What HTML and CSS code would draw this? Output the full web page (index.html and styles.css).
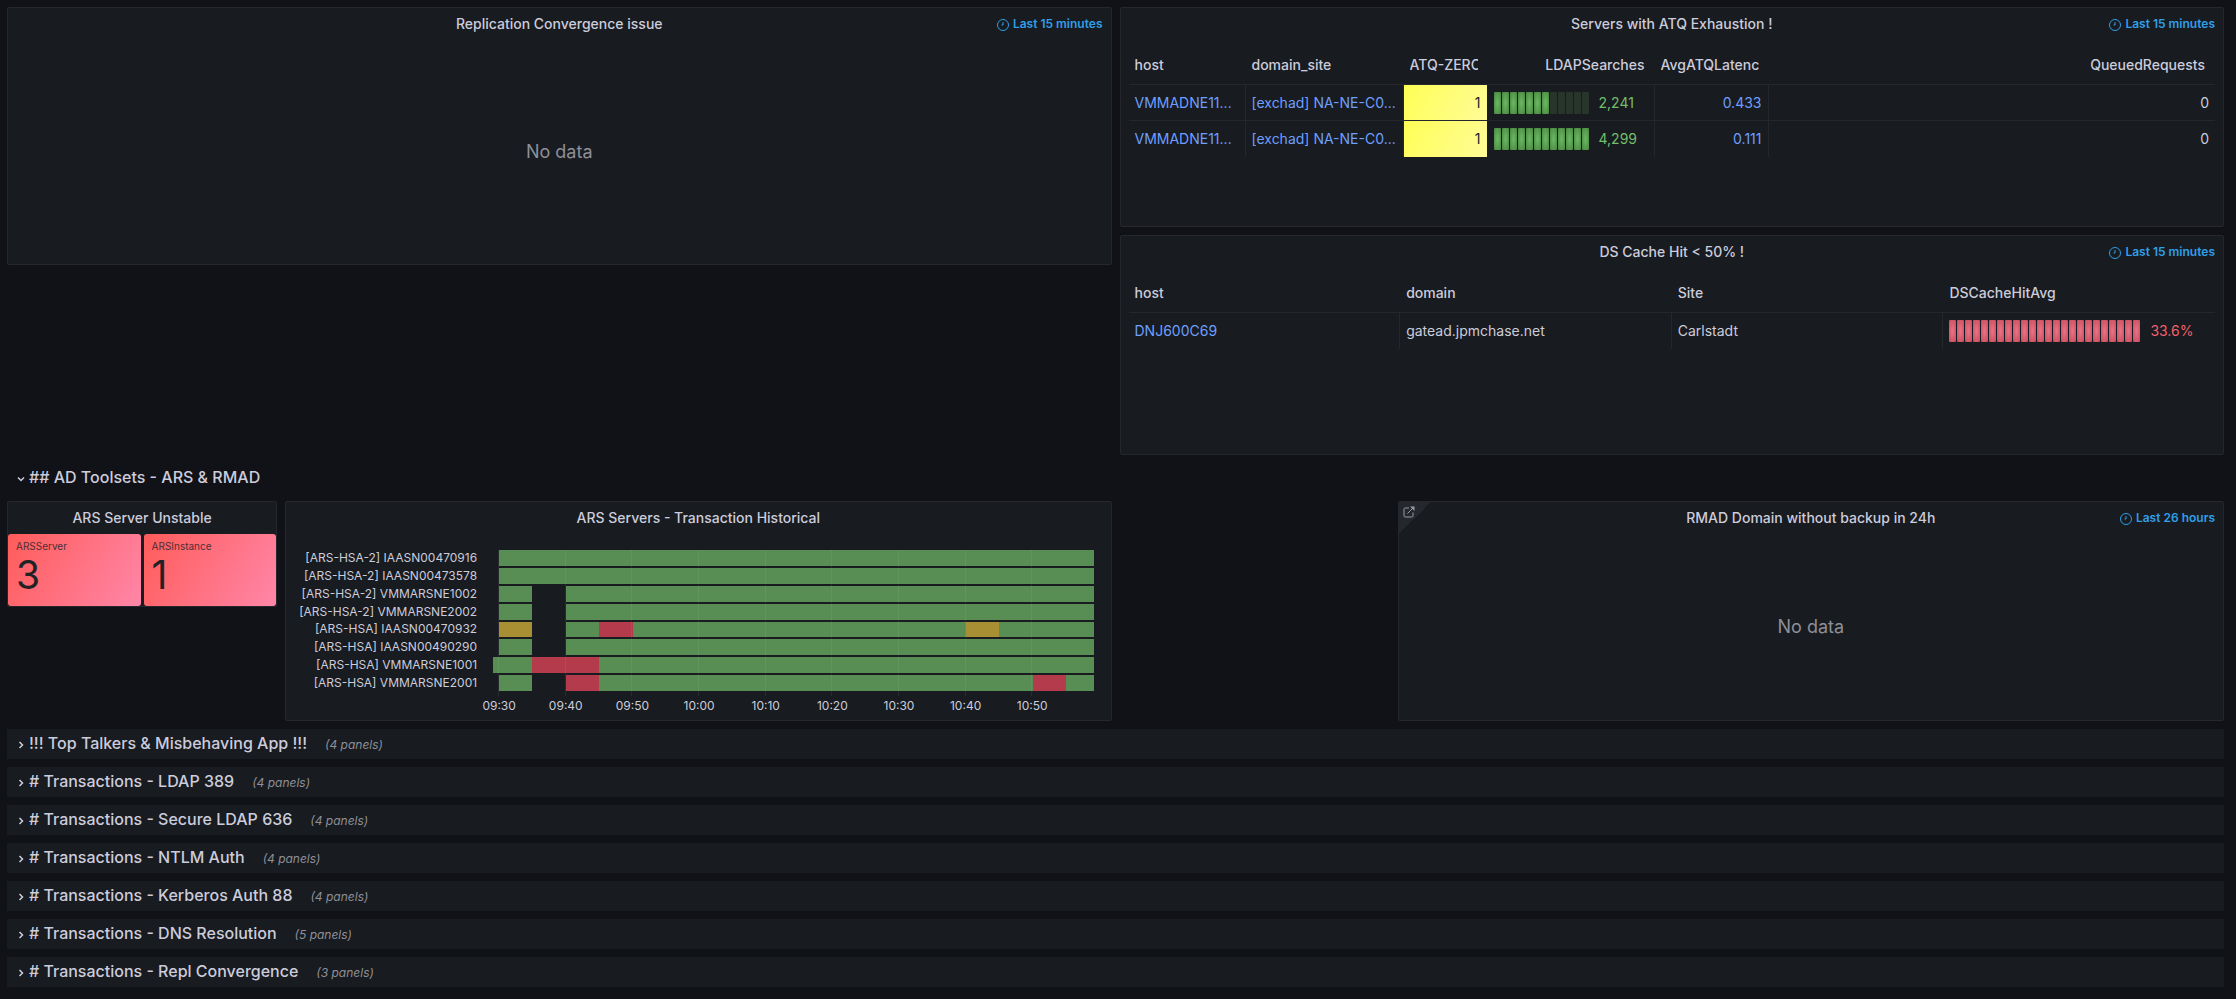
FILE: index.html
```html
<!DOCTYPE html>
<html lang="en">
<head>
<meta charset="utf-8">
<title>AD Dashboard</title>
<link rel="stylesheet" href="styles.css">
</head>
<body>
<svg class="sprite" aria-hidden="true">
  <symbol id="clock" viewBox="0 0 24 24"><circle cx="12" cy="12" r="11"/><path d="M12 6v6H9"/></symbol>
  <symbol id="right" viewBox="0 0 12 12"><path d="M4.500 3 7.500 6 4.500 9"/></symbol>
  <symbol id="down" viewBox="0 0 12 12"><path d="M3 4.500 6 7.500 9 4.500"/></symbol>
  <symbol id="external" viewBox="0 0 24 24"><path d="M12 4H4.500A2.500 2.500 0 0 0 2 6.500v13A2.500 2.500 0 0 0 4.500 22h13a2.500 2.500 0 0 0 2.500-2.500V13M9 15 20 4"/><path class="tip" d="M14 1h9v9z"/></symbol>
</svg>
<main class="dashboard">
  <section class="panel replication">
    <header class="panel-header"><h2>Replication Convergence issue</h2><span class="time"><svg><use href="#clock"/></svg>Last 15 minutes</span></header>
    <p class="no-data">No data</p>
  </section>

  <section class="panel atq">
    <header class="panel-header"><h2>Servers with ATQ Exhaustion !</h2><span class="time"><svg><use href="#clock"/></svg>Last 15 minutes</span></header>
    <div class="table-wrap">
      <table class="table">
        <colgroup><col class="c-host"><col class="c-site"><col class="c-zero"><col class="c-ldap"><col class="c-lat"><col></colgroup>
        <thead><tr><th>host</th><th>domain_site</th><th class="num clip"><span>ATQ-ZERO</span></th><th class="num">LDAPSearches</th><th class="num clip"><span>AvgATQLatency</span></th><th class="num">QueuedRequests</th></tr></thead>
        <tbody>
          <tr>
            <td><a href="#">VMMADNE11...</a></td><td><a href="#">[exchad] NA-NE-C0...</a></td><td class="num warn">1</td>
            <td><div class="gauge good"><i></i><i></i><i></i><i></i><i></i><i></i><i></i><i class="off"></i><i class="off"></i><i class="off"></i><i class="off"></i><i class="off"></i><span>2,241</span></div></td>
            <td class="num"><a href="#">0.433</a></td><td class="num">0</td>
          </tr>
          <tr>
            <td><a href="#">VMMADNE11...</a></td><td><a href="#">[exchad] NA-NE-C0...</a></td><td class="num warn">1</td>
            <td><div class="gauge good"><i></i><i></i><i></i><i></i><i></i><i></i><i></i><i></i><i></i><i></i><i></i><i></i><span>4,299</span></div></td>
            <td class="num"><a href="#">0.111</a></td><td class="num">0</td>
          </tr>
        </tbody>
      </table>
    </div>
  </section>

  <section class="panel cache">
    <header class="panel-header"><h2>DS Cache Hit &lt; 50% !</h2><span class="time"><svg><use href="#clock"/></svg>Last 15 minutes</span></header>
    <div class="table-wrap">
      <table class="table">
        <thead><tr><th>host</th><th>domain</th><th>Site</th><th>DSCacheHitAvg</th></tr></thead>
        <tbody>
          <tr>
            <td><a href="#">DNJ600C69</a></td><td>gatead.jpmchase.net</td><td>Carlstadt</td>
            <td><div class="gauge bad"><i></i><i></i><i></i><i></i><i></i><i></i><i></i><i></i><i></i><i></i><i></i><i></i><i></i><i></i><i></i><i></i><i></i><i></i><i></i><i></i><i></i><i></i><i></i><i></i><span>33.6%</span></div></td>
          </tr>
        </tbody>
      </table>
    </div>
  </section>

  <button class="row open" type="button" aria-expanded="true"><svg><use href="#down"/></svg><span>## AD Toolsets - ARS &amp; RMAD</span></button>

  <section class="panel unstable">
    <header class="panel-header"><h2>ARS Server Unstable</h2></header>
    <div class="stats">
      <div class="stat"><span>ARSServer</span><strong>3</strong></div>
      <div class="stat"><span>ARSInstance</span><strong>1</strong></div>
    </div>
  </section>

  <section class="panel history">
    <header class="panel-header"><h2>ARS Servers - Transaction Historical</h2></header>
    <div class="timeline">
      <ul class="names">
        <li>[ARS-HSA-2] IAASN00470916</li>
        <li>[ARS-HSA-2] IAASN00473578</li>
        <li>[ARS-HSA-2] VMMARSNE1002</li>
        <li>[ARS-HSA-2] VMMARSNE2002</li>
        <li>[ARS-HSA] IAASN00470932</li>
        <li>[ARS-HSA] IAASN00490290</li>
        <li>[ARS-HSA] VMMARSNE1001</li>
        <li>[ARS-HSA] VMMARSNE2001</li>
      </ul>
      <div class="plot">
        <div class="track"><i style="flex-grow:0.9"></i><i class="ok" style="flex-grow:89.1"></i></div>
        <div class="track"><i style="flex-grow:0.9"></i><i class="ok" style="flex-grow:89.1"></i></div>
        <div class="track"><i style="flex-grow:0.9"></i><i class="ok" style="flex-grow:5"></i><i style="flex-grow:5"></i><i class="ok" style="flex-grow:79.1"></i></div>
        <div class="track"><i style="flex-grow:0.9"></i><i class="ok" style="flex-grow:5"></i><i style="flex-grow:5"></i><i class="ok" style="flex-grow:79.1"></i></div>
        <div class="track"><i style="flex-grow:0.9"></i><i class="slow" style="flex-grow:5"></i><i style="flex-grow:5"></i><i class="ok" style="flex-grow:5"></i><i class="fail" style="flex-grow:5"></i><i class="ok" style="flex-grow:50"></i><i class="slow" style="flex-grow:5"></i><i class="ok" style="flex-grow:14.1"></i></div>
        <div class="track"><i style="flex-grow:0.9"></i><i class="ok" style="flex-grow:5"></i><i style="flex-grow:5"></i><i class="ok" style="flex-grow:79.1"></i></div>
        <div class="track"><i class="ok" style="flex-grow:5.9"></i><i class="fail" style="flex-grow:10"></i><i class="ok" style="flex-grow:74.1"></i></div>
        <div class="track"><i style="flex-grow:0.9"></i><i class="ok" style="flex-grow:5"></i><i style="flex-grow:5"></i><i class="fail" style="flex-grow:5"></i><i class="ok" style="flex-grow:65"></i><i class="fail" style="flex-grow:5"></i><i class="ok" style="flex-grow:4.1"></i></div>
        <div class="tick" style="left:1%"><span>09:30</span></div>
        <div class="tick" style="left:12.1%"><span>09:40</span></div>
        <div class="tick" style="left:23.2%"><span>09:50</span></div>
        <div class="tick" style="left:34.3%"><span>10:00</span></div>
        <div class="tick" style="left:45.4%"><span>10:10</span></div>
        <div class="tick" style="left:56.5%"><span>10:20</span></div>
        <div class="tick" style="left:67.6%"><span>10:30</span></div>
        <div class="tick" style="left:78.7%"><span>10:40</span></div>
        <div class="tick" style="left:89.8%"><span>10:50</span></div>
      </div>
    </div>
  </section>

  <section class="panel rmad">
    <a class="corner" href="#" aria-label="Panel links"><svg><use href="#external"/></svg></a>
    <header class="panel-header"><h2>RMAD Domain without backup in 24h</h2><span class="time"><svg><use href="#clock"/></svg>Last 26 hours</span></header>
    <p class="no-data">No data</p>
  </section>

  <button class="row" type="button" aria-expanded="false"><svg><use href="#right"/></svg><span>!!! Top Talkers &amp; Misbehaving App !!!</span><em>(4 panels)</em></button>
  <button class="row" type="button" aria-expanded="false"><svg><use href="#right"/></svg><span># Transactions - LDAP 389</span><em>(4 panels)</em></button>
  <button class="row" type="button" aria-expanded="false"><svg><use href="#right"/></svg><span># Transactions - Secure LDAP 636</span><em>(4 panels)</em></button>
  <button class="row" type="button" aria-expanded="false"><svg><use href="#right"/></svg><span># Transactions - NTLM Auth</span><em>(4 panels)</em></button>
  <button class="row" type="button" aria-expanded="false"><svg><use href="#right"/></svg><span># Transactions - Kerberos Auth 88</span><em>(4 panels)</em></button>
  <button class="row" type="button" aria-expanded="false"><svg><use href="#right"/></svg><span># Transactions - DNS Resolution</span><em>(5 panels)</em></button>
  <button class="row" type="button" aria-expanded="false"><svg><use href="#right"/></svg><span># Transactions - Repl Convergence</span><em>(3 panels)</em></button>
</main>
</body>
</html>
```

FILE: styles.css
```css
* { box-sizing: border-box; }

body {
  margin: 0;
  background: #111217;
  color: #ccccdc;
  font-family: Inter, "Liberation Sans", sans-serif;
  font-size: 14px;
  line-height: 22px;
}

a { color: #6e9fff; text-decoration: none; }

svg { flex: none; fill: none; stroke: currentColor; }

.sprite { position: absolute; width: 0; height: 0; }

/* 24-column dashboard grid */
.dashboard {
  display: grid;
  grid-template-columns: repeat(24, minmax(0, 1fr));
  grid-auto-rows: 30px;
  gap: 8px;
  padding: 7px 12px 12px 7px;
}

.panel {
  display: flex;
  flex-direction: column;
  position: relative;
  min-width: 0;
  background: #181b1f;
  border: 1px solid #25272c;
  border-radius: 2px;
}

.replication { grid-column: 1 / span 12; grid-row: 1 / span 7; }
.atq { grid-column: 13 / span 12; grid-row: 1 / span 6; }
.cache { grid-column: 13 / span 12; grid-row: 7 / span 6; }
.unstable { grid-column: 1 / span 3; grid-row: 14 / span 3; }
.history { grid-column: 4 / span 9; grid-row: 14 / span 6; }
.rmad { grid-column: 16 / span 9; grid-row: 14 / span 6; }

.panel-header {
  display: grid;
  grid-template-columns: 1fr auto 1fr;
  align-items: center;
  flex: none;
  height: 32px;
  padding: 0 8px;
}

.panel-header h2 {
  grid-column: 2;
  margin: 0;
  font-size: 14px;
  font-weight: 500;
}

.time {
  display: flex;
  align-items: center;
  justify-content: flex-end;
  gap: 4px;
  color: #2f9fe8;
  font-size: 12px;
  font-weight: 600;
}

.time svg { width: 12px; height: 12px; stroke-width: 2; overflow: visible; margin-top: 2px; }

.no-data {
  flex: 1;
  display: flex;
  align-items: center;
  justify-content: center;
  margin: 0;
  color: #8e8f99;
  font-size: 18px;
}

/* Tables */
.table-wrap { padding: 8px; }

.table {
  width: 100%;
  table-layout: fixed;
  border-collapse: separate;
  border-spacing: 0;
}

.c-host { width: 117px; }
.c-site { width: 158px; }
.c-zero { width: 84px; }
.c-ldap { width: 167px; }
.c-lat { width: 114px; }

.table th, .table td {
  height: 36px;
  padding: 0 6px;
  overflow: hidden;
  text-align: left;
  text-overflow: ellipsis;
  white-space: nowrap;
}

.table th {
  height: 37px;
  padding: 0 10px 2px 6px;
  border-bottom: 1px solid #25272c;
  font-weight: 500;
}

.table td { border-right: 1px solid #25272c; border-bottom: 1px solid #25272c; }
.table td:last-child { border-right: 0; }
.table tbody tr:last-child td { border-bottom: 0; }
.table .num { text-align: right; }
.clip span { display: block; overflow: hidden; text-align: left; }

.table .warn {
  background: linear-gradient(120deg, #ffff55, #fffb98) padding-box;
  border-right-color: #181b1f;
  color: #202226;
}

.gauge { display: flex; align-items: center; gap: 1px; line-height: 22px; }
.gauge i { width: 7px; height: 22px; border-radius: 1px; }
.gauge span { margin-left: 9px; }
.good { color: #73bf69; }
.good i { background: radial-gradient(#6cb864, #48863f); }
.good .off { background: #27352a; }
.bad { color: #f2606f; }
.bad i { background: radial-gradient(#ea7286, #c64c5c); }

/* Stat tiles */
.stats { display: flex; flex: 1; gap: 3px; }

.stat {
  display: flex;
  flex: 1;
  flex-direction: column;
  padding: 5px 8px;
  border-radius: 3px;
  background: linear-gradient(120deg, #ff5c5a, #ff86a8);
  color: #202226;
}

.stat span { font-size: 10px; line-height: 14px; opacity: 0.8; }
.stat strong { font-size: 39px; font-weight: 400; line-height: 44px; }

/* State timeline */
.timeline {
  display: grid;
  grid-template-columns: 183px 1fr;
  gap: 16px;
  flex: 1;
  padding: 16px 17px 29px 8px;
}

.names, .plot { display: flex; flex-direction: column; gap: 2px; }
.names { margin: 0; padding: 0; list-style: none; font-size: 12px; text-align: right; white-space: nowrap; }
.names li { display: flex; flex: 1 1 0; align-items: center; justify-content: flex-end; min-height: 0; line-height: 14px; }
.plot { position: relative; }
.track { display: flex; flex: 1 1 0; }
.track i { flex: 0 1 0; }
.ok { background: #588e53; }
.fail { background: #b33b4b; }
.slow { background: #a88f34; }

.tick {
  position: absolute;
  top: 0;
  bottom: -5px;
  margin-left: -1px;
  border-left: 1px solid rgba(204, 204, 220, 0.09);
}

.tick span {
  position: absolute;
  top: 100%;
  left: 0;
  padding-top: 2px;
  font-size: 12px;
  line-height: 16px;
  transform: translateX(-50%);
}

/* Corner link */
.corner {
  position: absolute;
  top: 0;
  left: 0;
  width: 32px;
  height: 32px;
  padding: 4px;
  background: linear-gradient(135deg, #24282d 50%, transparent 50%);
  color: #9a9ba6;
  line-height: 0;
}

.corner svg { width: 12px; height: 12px; stroke-width: 2; overflow: visible; }
.tip { fill: currentColor; stroke: none; }

/* Dashboard rows */
.row {
  grid-column: 1 / -1;
  display: flex;
  align-items: center;
  padding: 0 8px 2px;
  border: 0;
  background: #181b1f;
  color: #ccccdc;
  font: 500 16px/24px Inter, "Liberation Sans", sans-serif;
  text-align: left;
}

.row.open { grid-row: 13; background: none; }
.row svg { width: 12px; height: 12px; margin: 4px 2px 0 0; stroke-width: 1.5; }
.row em { margin-left: 18px; padding-top: 4px; color: #8e8f99; font-size: 12px; font-weight: 400; }
```
